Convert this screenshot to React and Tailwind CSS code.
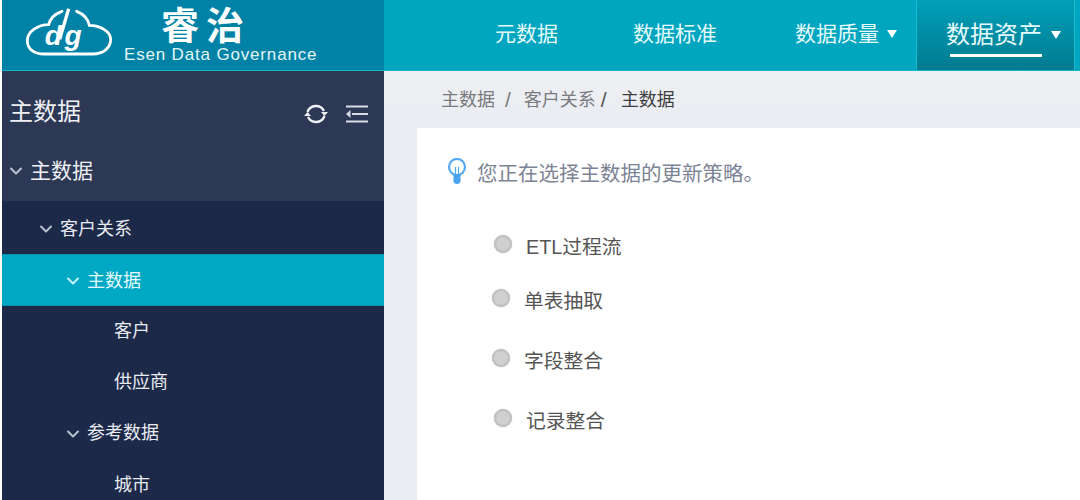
import { ChevronDown } from "lucide-react"

const cjk = "font-['Liberation_Sans','Noto_Sans_CJK_SC',sans-serif]"

const options = [
  { label: 'ETL过程流', cls: 'pb-[30px]', radio: 'mr-[14px]' },
  { label: '单表抽取', cls: 'pb-[36px] -ml-[2px]', radio: 'mr-[14px]' },
  { label: '字段整合', cls: 'pb-[36px] -ml-[2px]', radio: 'mr-[14px]' },
  { label: '记录整合', cls: '', radio: 'mr-[14px]' },
]

function Logo() {
  return (
    <svg width="100" height="60" viewBox="0 0 300 180" fill="none" className="mt-[2px] shrink-0">
      <path
        d="M126 28 C104 36 90 50 86 68 C55 68 22 88 22 116 C22 144 46 156 72 156 H218 C250 156 272 138 272 112 C272 88 240 70 208 70 C204 50 190 36 170 28"
        stroke="white"
        strokeWidth="8.5"
        strokeLinecap="round"
      />
      <path d="M146 20 L119 112" stroke="white" strokeWidth="10" />
      <text x="74" y="128" fill="white" fontSize="84" fontWeight="700" fontStyle="italic" letterSpacing="8" fontFamily="Liberation Sans">dg</text>
    </svg>
  )
}

function Caret({ ml = 'ml-[8px]' }) {
  return <span className={`${ml} w-0 h-0 border-x-[5px] border-t-[8px] border-x-transparent border-t-white`} />
}

function RefreshIcon() {
  return (
    <svg width="24" height="24" viewBox="0 0 24 24" fill="none" stroke="#eef0f5" strokeWidth="2.4">
      <path d="M3.5 10 A9 9 0 0 1 20 9" />
      <path d="M20.5 14 A9 9 0 0 1 4 15" />
      <path d="M17 10 H24 L20.5 14 Z" fill="#eef0f5" stroke="none" />
      <path d="M0 14 H7 L3.5 10 Z" fill="#eef0f5" stroke="none" />
    </svg>
  )
}

function OutdentIcon() {
  return (
    <svg width="22" height="18" viewBox="0 0 22 18" fill="none" stroke="#d8dce4" strokeWidth="2.2">
      <path d="M0 1.5 H22 M6 9 H22 M0 16.5 H22" />
      <path d="M4.5 5 L0 9 L4.5 13 Z" fill="#d8dce4" stroke="none" />
    </svg>
  )
}

function BulbIcon() {
  return (
    <svg width="20" height="27" viewBox="0 0 20 27" fill="none" className="mr-[10px] -mt-[5px] -ml-[1px] shrink-0">
      <circle cx="10" cy="9" r="8" stroke="#55a9f2" strokeWidth="2.2" />
      <path d="M8.5 9 V16 M11.5 9 V16" stroke="#55a9f2" strokeWidth="1.2" />
      <path d="M6.5 16 H13.5 V23 C13.5 25 12 26 10 26 C8 26 6.5 25 6.5 23 Z" fill="#4aa3f0" />
    </svg>
  )
}

function TreeRow({ label, indent, arrow, active, h = 'h-[51px]', pt = 'pt-[2px]' }) {
  return (
    <div className={`${h} ${indent} ${pt} shrink-0 text-[18px] flex items-center gap-[4px] ${active ? 'bg-[#00a8c4] border-y border-[#0793ad] text-[#e4fbff]' : 'text-[#e8ebf2]'}`}>
      {arrow && <ChevronDown size={20} strokeWidth={2.4} className={active ? 'text-[#c5f0f7]' : 'text-[#b9c0cf]'} />}
      <span>{label}</span>
    </div>
  )
}

export default function App() {
  return (
    <div className={`${cjk} w-[1080px] h-[500px] overflow-hidden bg-white flex`}>
      <div className="w-[2px] shrink-0 bg-white" />
      <div className="flex-1 min-w-0 flex flex-col">
        <header className="h-[71px] shrink-0 flex border-b border-[#17b5cb] text-white">
          <div className="w-[382px] shrink-0 bg-[#0082a6] flex pl-[18px]">
            <Logo />
            <div className="ml-[4px] flex flex-col items-start pt-[6px]">
              <div className="ml-[37px] text-[38px] leading-[40px] font-bold tracking-[7px]">睿治</div>
              <div className="-mt-[1px] text-[17px] leading-[20px] tracking-[0.83px] text-[#e3f6f6]">Esen Data Governance</div>
            </div>
          </div>
          <nav className="flex-1 bg-[#00a5bf] flex items-stretch text-[21px] text-[#e6fbfd]">
            <div className="w-[532px] flex items-center pb-[2px]">
              <span className="ml-[111px]">元数据</span>
              <span className="ml-[75px]">数据标准</span>
              <span className="ml-[78px]">数据质量</span>
              <Caret />
            </div>
            <div className="w-[159px] border-x border-[#14bccf] bg-gradient-to-b from-[#00a0b9] to-[#007b90] flex flex-col pl-[29px] pt-[19px]">
              <div className="flex items-center text-[24px] leading-[32px]">
                <span>数据资产</span>
                <Caret ml="ml-[9px]" />
              </div>
              <div className="mt-[3px] h-[3px] w-[92px] ml-[4px] bg-white" />
            </div>
          </nav>
        </header>
        <div className="flex-1 min-h-0 flex">
          <aside className="w-[382px] shrink-0 bg-[#1d2948] flex flex-col">
            <div className="h-[130px] bg-[#2d3855] shrink-0 flex flex-col text-[#eef0f5]">
              <div className="h-[81px] flex items-center justify-between pl-[7px] pr-[16px] text-[24px]">
                <span>主数据</span>
                <div className="flex items-center gap-[18px] pt-[4px]">
                  <RefreshIcon />
                  <OutdentIcon />
                </div>
              </div>
              <div className="h-[37px] flex items-center gap-[4px] pl-[4px] text-[21px]">
                <ChevronDown size={20} strokeWidth={2.4} className="text-[#b9c0cf]" />
                <span>主数据</span>
              </div>
            </div>
            <TreeRow label="客户关系" indent="pl-[34px]" arrow h="h-[53px]" pt="pt-[3px]" />
            <TreeRow label="主数据" indent="pl-[61px]" arrow active h="h-[52px]" />
            <TreeRow label="客户" indent="pl-[112px]" h="h-[49px]" />
            <TreeRow label="供应商" indent="pl-[112px]" h="h-[52px]" />
            <TreeRow label="参考数据" indent="pl-[61px]" arrow />
            <TreeRow label="城市" indent="pl-[112px]" h="h-[52px]" />
          </aside>
          <main className="flex-1 min-w-0 bg-[#eaedf1] flex flex-col">
            <div className="h-[57px] shrink-0 flex items-center pl-[57px] pt-[1px] text-[18px] text-[#7b7b7f] bg-gradient-to-b from-[#eef0f3] to-[#e9ecf1]">
              <span>主数据</span>
              <span className="ml-[10px] mr-[13px] text-[21px] leading-[24px]">/</span>
              <span>客户关系</span>
              <span className="ml-[5px] mr-[14px] text-[21px] leading-[24px] text-[#555]">/</span>
              <span className="text-[#3f3f42]">主数据</span>
            </div>
            <div className="flex-1 bg-white ml-[33px] pl-[31px] pt-[31px]">
              <div className="flex items-center text-[#7c8394] text-[20.5px] leading-[30px]">
                <BulbIcon />
                <span>您正在选择主数据的更新策略。</span>
              </div>
              <div className="mt-[46px] pl-[46px]">
                {options.map((o) => (
                  <div key={o.label} className={`flex items-center text-[19.8px] leading-[24px] text-[#555] ${o.cls}`}>
                    <span className={`w-[18px] h-[18px] rounded-full bg-[radial-gradient(circle,#d0d0d0_45%,#a9a9a9_85%,#bdbdbd_100%)] shadow-[0_0_1px_#999] -mt-[6px] shrink-0 ${o.radio}`} />
                    <span>{o.label}</span>
                  </div>
                ))}
              </div>
            </div>
          </main>
        </div>
      </div>
    </div>
  )
}
